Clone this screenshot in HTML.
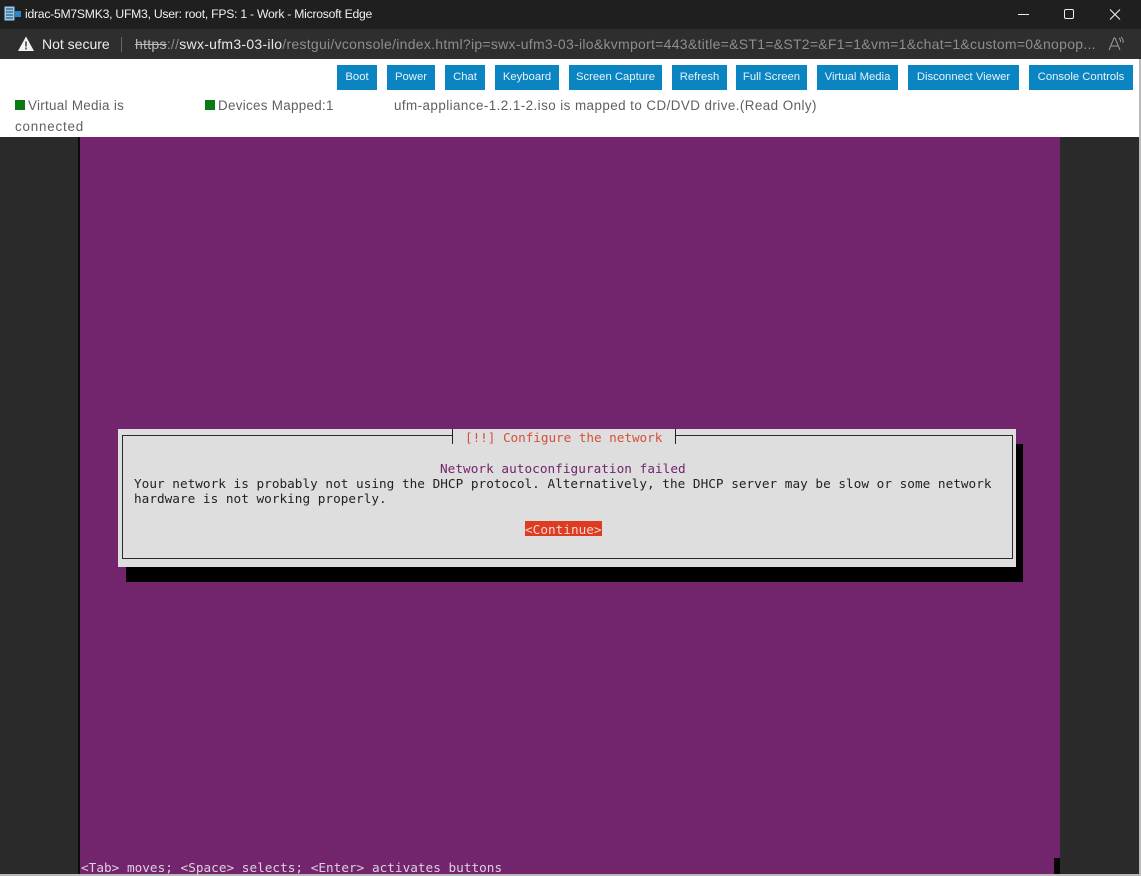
<!DOCTYPE html>
<html><head><meta charset="utf-8">
<style>
html,body{margin:0;padding:0;background:#2a2a2a}
body{width:1141px;height:876px;position:relative;overflow:hidden;font-family:"Liberation Sans",sans-serif}
.a{position:absolute}
.t{position:absolute;white-space:pre;line-height:1}
.b{position:absolute;top:65px;height:25px;background:#0a85c2;color:#e6f3fa;font-size:11.3px;line-height:25px;text-align:center;white-space:nowrap}
.m{position:absolute;white-space:pre;font-family:"DejaVu Sans Mono",monospace;font-size:12.7px;line-height:15px;letter-spacing:.018px}
.s{position:absolute;font-size:13.4px;line-height:21px;color:#606060;letter-spacing:.3px;white-space:pre}
</style></head><body>
<div class="a" style="left:0;top:0;width:1141px;height:29px;background:#1f1f1f"></div>
<div class="a" style="left:0;top:29px;width:1141px;height:30px;background:#2e2e2e"></div>
<svg class="a" style="left:4px;top:6px" width="18" height="16" viewBox="0 0 18 16"><rect x="0.5" y="0.5" width="10" height="14" fill="#9cc9e6"/><path d="M2 3h7M2 6h7M2 9h7M2 12h7" stroke="#1f5f8f" stroke-width="1.2"/><rect x="11" y="5" width="6" height="6" fill="#2a86c4"/></svg>
<div class="t" style="left:25px;top:8px;font-size:12.2px;letter-spacing:-.25px;color:#f0f0f0">idrac-5M7SMK3, UFM3, User: root, FPS: 1 - Work - Microsoft Edge</div>
<svg class="a" style="left:1017px;top:8px" width="112" height="13" viewBox="0 0 112 13"><path d="M1 6.5h11" stroke="#eee" stroke-width="1"/><rect x="47.5" y="1.5" width="9" height="9" rx="1.5" fill="none" stroke="#eee" stroke-width="1"/><path d="M93 1.5l10 10M103 1.5l-10 10" stroke="#eee" stroke-width="1.1"/></svg>
<svg class="a" style="left:17px;top:36px" width="18" height="16" viewBox="0 0 18 16"><path d="M9 0.5L17 15H1z" fill="#f2f2f2"/><path d="M9 5.5v5M9 11.5v2" stroke="#2e2e2e" stroke-width="1.4"/></svg>
<div class="t" style="left:42px;top:37px;font-size:14px;color:#eee">Not secure</div>
<div class="a" style="left:121px;top:37px;width:1px;height:15px;background:#666"></div>
<div class="t" style="left:135px;top:37px;font-size:14px;color:#8e8e8e;letter-spacing:.28px"><span style="color:#bbb;text-decoration:line-through">https</span>://<span style="color:#e8e8e8">swx-ufm3-03-ilo</span>/restgui/vconsole/index.html?ip=swx-ufm3-03-ilo&amp;kvmport=443&amp;title=&amp;ST1=&amp;ST2=&amp;F1=1&amp;vm=1&amp;chat=1&amp;custom=0&amp;nopop...</div>
<svg class="a" style="left:1108px;top:36px" width="17" height="16" viewBox="0 0 17 16"><path d="M1 14L6 2h1l5 12M3 10h7" fill="none" stroke="#999" stroke-width="1"/><path d="M11 2q2 2 1.5 4M13 1q3 3 2 6" fill="none" stroke="#999" stroke-width="1"/></svg>
<div class="a" style="left:0;top:59px;width:1139px;height:78px;background:#fff"></div>
<div class="a" style="left:1139px;top:59px;width:2px;height:817px;background:#b9b9b9"></div>
<div class="b" style="left:337px;width:40px">Boot</div>
<div class="b" style="left:387px;width:48px">Power</div>
<div class="b" style="left:445px;width:40px">Chat</div>
<div class="b" style="left:495px;width:64px">Keyboard</div>
<div class="b" style="left:569px;width:93px">Screen Capture</div>
<div class="b" style="left:672px;width:55px">Refresh</div>
<div class="b" style="left:736px;width:71px">Full Screen</div>
<div class="b" style="left:817px;width:81px">Virtual Media</div>
<div class="b" style="left:908px;width:111px">Disconnect Viewer</div>
<div class="b" style="left:1029px;width:104px">Console Controls</div>
<div class="a" style="left:15px;top:100px;width:10px;height:10px;background:#0a7a14"></div>
<div class="s" style="left:28px;top:95px">Virtual Media is</div>
<div class="s" style="left:15px;top:116px;letter-spacing:.8px">connected</div>
<div class="a" style="left:205px;top:100px;width:10px;height:10px;background:#0a7a14"></div>
<div class="s" style="left:218px;top:95px">Devices Mapped:1</div>
<div class="s" style="left:394px;top:95px;letter-spacing:.44px">ufm-appliance-1.2.1-2.iso is mapped to CD/DVD drive.(Read Only)</div>
<div class="a" style="left:0;top:137px;width:1139px;height:737px;background:#2a2a2a"></div>
<div class="a" style="left:78px;top:137px;width:2px;height:737px;background:#0c0c0c"></div>
<div class="a" style="left:80px;top:137px;width:980px;height:737px;background:#72246c"></div>
<div class="a" style="left:0;top:874px;width:1141px;height:2px;background:#b9b9b9"></div>
<div class="a" style="left:1054px;top:858px;width:6px;height:16px;background:#060606"></div>
<div class="a" style="left:126px;top:444px;width:897px;height:138px;background:#000"></div>
<div class="a" style="left:118px;top:429px;width:898px;height:138px;background:#dedede"></div>
<div class="a" style="left:122px;top:435px;width:889px;height:122px;border:1px solid #2a2a2a"></div>
<div class="a" style="left:453px;top:430px;width:222px;height:14px;background:#dedede"></div>
<div class="a" style="left:452px;top:429px;width:1px;height:15px;background:#222"></div>
<div class="a" style="left:675px;top:429px;width:1px;height:15px;background:#222"></div>
<div class="m" style="left:465px;top:430px;color:#d5503a;letter-spacing:-.05px">[!!] Configure the network</div>
<div class="m" style="left:440px;top:461px;color:#72246c;letter-spacing:.04px">Network autoconfiguration failed</div>
<div class="m" style="left:134px;top:476px;color:#222">Your network is probably not using the DHCP protocol. Alternatively, the DHCP server may be slow or some network
hardware is not working properly.</div>
<div class="a" style="left:525px;top:521px;width:77px;height:15px;background:#de3c22"></div>
<div class="m" style="left:525px;top:522px;color:#f0d8d0">&lt;Continue&gt;</div>
<div class="m" style="left:81px;top:860px;color:#e0cfe0">&lt;Tab&gt; moves; &lt;Space&gt; selects; &lt;Enter&gt; activates buttons</div>
</body></html>
